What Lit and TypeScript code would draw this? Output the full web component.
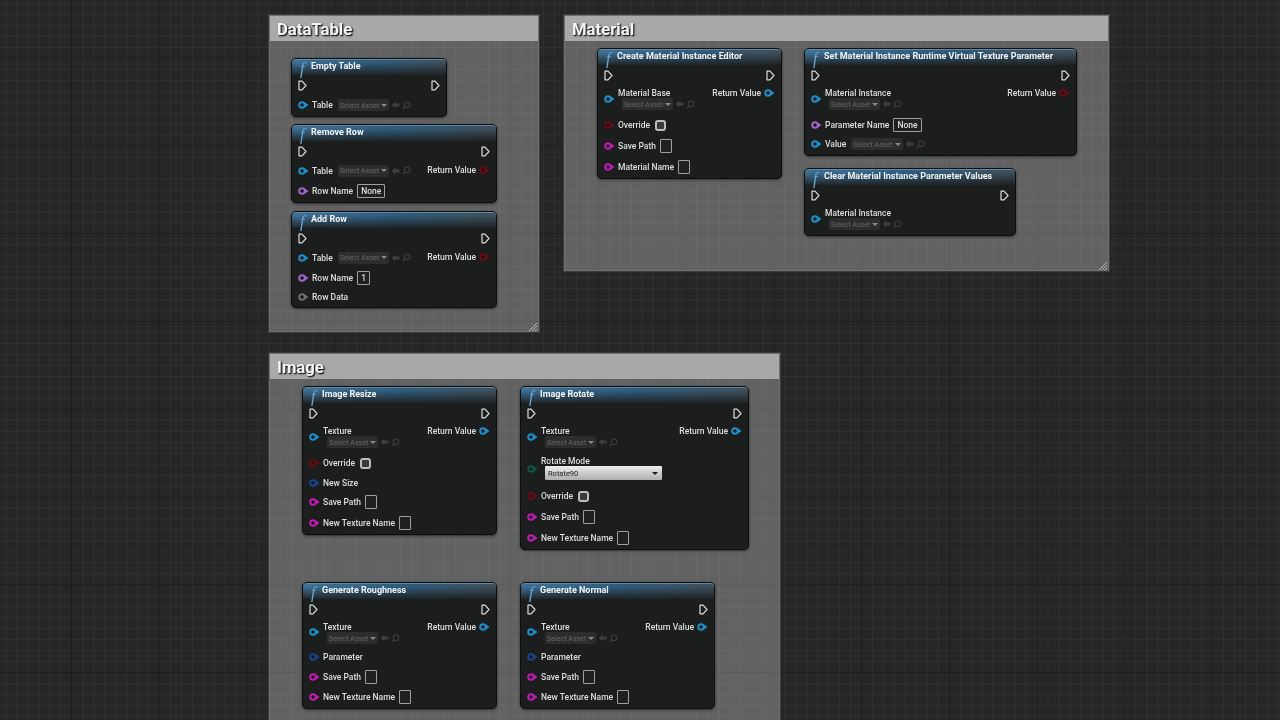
import { LitElement, css, html, nothing, svg } from 'lit';
import { customElement, property } from 'lit/decorators.js';

type PinType = 'object' | 'name' | 'string' | 'bool' | 'struct' | 'wild' | 'enum';

interface Row {
  pin: PinType;
  label: string;
  h: number;
  // what sits next to the label
  asset?: 'inline' | 'below';
  text?: string;
  check?: boolean;
  dropdown?: string;
  ret?: PinType;
}

interface NodeData {
  title: string;
  x: number;
  y: number;
  w: number;
  rows: Row[];
}

interface CommentData {
  title: string;
  x: number;
  y: number;
  w: number;
  h: number;
}

const comments: CommentData[] = [
  { title: 'DataTable', x: 269, y: 15, w: 270, h: 317 },
  { title: 'Material', x: 564, y: 15, w: 545, h: 256 },
  { title: 'Image', x: 269, y: 353, w: 511, h: 420 },
];

const nodes: NodeData[] = [
  {
    title: 'Empty Table', x: 291, y: 58, w: 156,
    rows: [{ pin: 'object', label: 'Table', h: 20, asset: 'inline' }],
  },
  {
    title: 'Remove Row', x: 291, y: 124, w: 206,
    rows: [
      { pin: 'object', label: 'Table', h: 19, asset: 'inline', ret: 'bool' },
      { pin: 'name', label: 'Row Name', h: 21, text: 'None' },
    ],
  },
  {
    title: 'Add Row', x: 291, y: 211, w: 206,
    rows: [
      { pin: 'object', label: 'Table', h: 19, asset: 'inline', ret: 'bool' },
      { pin: 'name', label: 'Row Name', h: 21, text: '1' },
      { pin: 'wild', label: 'Row Data', h: 18 },
    ],
  },
  {
    title: 'Create Material Instance Editor', x: 597, y: 48, w: 185,
    rows: [
      { pin: 'object', label: 'Material Base', h: 30, asset: 'below', ret: 'object' },
      { pin: 'bool', label: 'Override', h: 20, check: true },
      { pin: 'string', label: 'Save Path', h: 21, text: '' },
      { pin: 'string', label: 'Material Name', h: 21, text: '' },
    ],
  },
  {
    title: 'Set Material Instance Runtime Virtual Texture Parameter', x: 804, y: 48, w: 273,
    rows: [
      { pin: 'object', label: 'Material Instance', h: 30, asset: 'below', ret: 'bool' },
      { pin: 'name', label: 'Parameter Name', h: 19, text: 'None' },
      { pin: 'object', label: 'Value', h: 20, asset: 'inline' },
    ],
  },
  {
    title: 'Clear Material Instance Parameter Values', x: 804, y: 168, w: 212,
    rows: [{ pin: 'object', label: 'Material Instance', h: 29, asset: 'below' }],
  },
  {
    title: 'Image Resize', x: 302, y: 386, w: 195,
    rows: [
      { pin: 'object', label: 'Texture', h: 30, asset: 'below', ret: 'object' },
      { pin: 'bool', label: 'Override', h: 20, check: true },
      { pin: 'struct', label: 'New Size', h: 19 },
      { pin: 'string', label: 'Save Path', h: 20, text: '' },
      { pin: 'string', label: 'New Texture Name', h: 21, text: '' },
    ],
  },
  {
    title: 'Image Rotate', x: 520, y: 386, w: 229,
    rows: [
      { pin: 'object', label: 'Texture', h: 30, asset: 'below', ret: 'object' },
      { pin: 'enum', label: 'Rotate Mode', h: 33, dropdown: 'Rotate90' },
      { pin: 'bool', label: 'Override', h: 20, check: true },
      { pin: 'string', label: 'Save Path', h: 21, text: '' },
      { pin: 'string', label: 'New Texture Name', h: 21, text: '' },
    ],
  },
  {
    title: 'Generate Roughness', x: 302, y: 582, w: 195,
    rows: [
      { pin: 'object', label: 'Texture', h: 28, asset: 'below', ret: 'object' },
      { pin: 'struct', label: 'Parameter', h: 20 },
      { pin: 'string', label: 'Save Path', h: 19, text: '' },
      { pin: 'string', label: 'New Texture Name', h: 21, text: '' },
    ],
  },
  {
    title: 'Generate Normal', x: 520, y: 582, w: 195,
    rows: [
      { pin: 'object', label: 'Texture', h: 28, asset: 'below', ret: 'object' },
      { pin: 'struct', label: 'Parameter', h: 20 },
      { pin: 'string', label: 'Save Path', h: 19, text: '' },
      { pin: 'string', label: 'New Texture Name', h: 21, text: '' },
    ],
  },
];

const pinIcon = (type: PinType) => html`<svg class="pin ${type}" viewBox="0 0 11 8" width="11" height="8">
  <circle cx="4" cy="4" r="2.8" fill="#141516" stroke="currentColor" stroke-width="2"></circle>
  <polygon points="7,1.6 10.6,4 7,6.4" fill="currentColor"></polygon>
</svg>`;

const execIcon = html`<svg class="exec" viewBox="0 0 9 11" width="9" height="11">
  <path d="M1 1.2 H4 L8 5.5 L4 9.8 H1 Z" fill="none" stroke="#dcdcdc" stroke-width="1.2" stroke-linejoin="round"></path>
</svg>`;

const assetPicker = html`<span class="asset">
  <span class="asset-box">Select Asset<i class="caret"></i></span>
  <svg viewBox="0 0 9 8" width="9" height="8"><path d="M0.5 4 L4.5 0.5 V2.6 H8.5 V5.4 H4.5 V7.5 Z" fill="#3d3e3e"></path></svg>
  <svg viewBox="0 0 9 9" width="9" height="9">
    <circle cx="5" cy="3.8" r="2.8" fill="none" stroke="#3d3e3e" stroke-width="1.1"></circle>
    <path d="M3 5.8 L0.8 8" stroke="#3d3e3e" stroke-width="1.2"></path>
  </svg>
</span>`;

@customElement('bp-node')
export class BpNode extends LitElement {
  @property({ attribute: false }) data!: NodeData;

  renderRow(row: Row) {
    const stacked = row.asset === 'below' || !!row.dropdown;
    return html`<div class="row" style="height:${row.h}px">
      <div class="left ${stacked ? 'stacked' : ''}">
        ${pinIcon(row.pin)}
        ${stacked
          ? html`<div class="stack">
              <span class="label">${row.label}</span>
              ${row.dropdown
                ? html`<span class="dropdown">${row.dropdown}<i class="caret"></i></span>`
                : assetPicker}
            </div>`
          : html`<span class="label">${row.label}</span>
              ${row.asset === 'inline' ? assetPicker : nothing}
              ${row.text !== undefined ? html`<span class="text-box">${row.text}</span>` : nothing}
              ${row.check ? html`<span class="check"></span>` : nothing}`}
      </div>
      ${row.ret
        ? html`<div class="right ${stacked ? 'top' : ''}">
            <span class="label">Return Value</span>${pinIcon(row.ret)}
          </div>`
        : nothing}
    </div>`;
  }

  render() {
    const d = this.data;
    return html`<div class="node" style="left:${d.x}px;top:${d.y}px;width:${d.w}px">
      <div class="header"><span class="fn">f</span>${d.title}</div>
      <div class="exec-row">${execIcon}${execIcon}</div>
      ${d.rows.map((r) => this.renderRow(r))}
    </div>`;
  }

  static styles = css`
    .node {
      position: absolute;
      box-sizing: border-box;
      padding-bottom: 1px;
      background: #1c1e1e;
      border: 1px solid #0c0d0e;
      border-radius: 5px;
      box-shadow: 0 1px 3px rgba(0, 0, 0, 0.55);
      font-family: Roboto, 'Liberation Sans', sans-serif;
      font-size: 8.5px;
      font-weight: 500;
      color: #dedede;
    }
    .header {
      display: flex;
      align-items: center;
      height: 16px;
      box-sizing: border-box;
      padding: 0 0 3px 8px;
      border-radius: 4px 4px 0 0;
      border-top: 1px solid #5f8aa8;
      background:
        linear-gradient(to bottom, rgba(28, 30, 30, 0) 15%, rgba(28, 30, 30, 0.9) 100%),
        linear-gradient(to right, #3f7196, #2f5c7e 50%, #3f4f5a 100%);
      color: #f2f5f7;
      font-size: 9px;
      font-weight: 700;
      white-space: nowrap;
    }
    .fn {
      width: 11px;
      margin-top: 4px;
      font-family: 'Liberation Serif', serif;
      font-style: italic;
      font-size: 16px;
      font-weight: 400;
      line-height: 13px;
      color: #6aa9d4;
    }
    .exec-row {
      display: flex;
      justify-content: space-between;
      align-items: center;
      height: 20px;
      padding: 0 6px;
    }
    .row {
      display: flex;
      justify-content: space-between;
      align-items: center;
      padding: 0 6px;
      white-space: nowrap;
    }
    .left,
    .right {
      display: flex;
      align-items: center;
      box-sizing: border-box;
      height: 100%;
    }
    .left {
      gap: 4px;
    }
    .left.stacked {
      padding-bottom: 2px;
    }
    .pin {
      flex: none;
    }
    .left > .pin + * {
      margin-left: -1px;
    }
    .right {
      gap: 3px;
      padding-bottom: 2px;
    }
    .right.top {
      height: 16px;
      padding-bottom: 0;
      align-self: flex-start;
    }
    .object { color: #1d8fca; }
    .name { color: #a364c8; }
    .string { color: #c21ab4; }
    .bool { color: #6b0b10; }
    .struct { color: #17468f; }
    .wild { color: #6e6e6e; }
    .enum { color: #0c574d; }
    .label {
      line-height: 12px;
    }
    .stack {
      display: flex;
      flex-direction: column;
      align-items: flex-start;
      align-self: flex-start;
      padding-top: 2px;
    }
    .asset {
      display: inline-flex;
      align-items: center;
      gap: 2px;
      margin-left: 1px;
    }
    .stack .asset {
      margin: -1px 0 0 4px;
    }
    .asset-box {
      display: inline-flex;
      align-items: center;
      gap: 2px;
      height: 12px;
      padding: 0 2px 0 2px;
      background: #2c2d2d;
      border-radius: 2px;
      color: #686868;
      font-size: 7.1px;
      font-weight: 400;
    }
    .caret {
      width: 0;
      height: 0;
      border-left: 3px solid transparent;
      border-right: 3px solid transparent;
      border-top: 3px solid #8a8a8a;
    }
    .text-box {
      box-sizing: border-box;
      height: 14px;
      min-width: 12px;
      padding: 0 3px;
      border: 1px solid #a0a0a0;
      border-radius: 1px;
      background: #1f2020;
      line-height: 12px;
    }
    .check {
      box-sizing: border-box;
      width: 11px;
      height: 11px;
      margin-left: 1px;
      border: 2px solid #bdbdbd;
      border-radius: 3px;
      background: #3a3b3c;
    }
    .dropdown {
      display: flex;
      justify-content: space-between;
      align-items: center;
      box-sizing: border-box;
      width: 117px;
      height: 14px;
      margin: -1px 0 0 4px;
      padding: 0 3px;
      border-radius: 1px;
      background: linear-gradient(to bottom, #efefef, #c9c9c9 55%, #b0b0b0);
      color: #222;
      font-size: 7.5px;
      font-weight: 400;
    }
    .dropdown .caret {
      margin-right: 1px;
      border-left-width: 3.5px;
      border-right-width: 3.5px;
      border-top: 3.5px solid #1a1a1a;
    }
  `;
}

@customElement('app-root')
export class AppRoot extends LitElement {
  renderComment(c: CommentData) {
    return html`<div class="comment" style="left:${c.x}px;top:${c.y}px;width:${c.w}px;height:${c.h}px">
      <div class="comment-title">${c.title}</div>
      <svg class="grip" viewBox="0 0 10 9" width="10" height="9">
        ${[0, 3, 6].map(
          (o) => svg`<line x1=${10 - (8 - o)} y1="9" x2="10" y2=${o + 1} stroke="#b8b8b8" stroke-width="1"></line>`,
        )}
      </svg>
    </div>`;
  }

  render() {
    return html`<div class="graph">
      ${comments.map((c) => this.renderComment(c))}
      ${nodes.map((n) => html`<bp-node .data=${n}></bp-node>`)}
    </div>`;
  }

  static styles = css`
    :host {
      display: block;
      width: 1280px;
      height: 720px;
      overflow: hidden;
    }
    .graph {
      position: relative;
      width: 1280px;
      height: 720px;
      overflow: hidden;
      filter: blur(0.3px);
      background-color: #262626;
      background-image:
        linear-gradient(to right, #1a1a1a 1px, transparent 1px),
        linear-gradient(to bottom, #1a1a1a 1px, transparent 1px),
        linear-gradient(to right, #303030 1px, transparent 1px),
        linear-gradient(to bottom, #303030 1px, transparent 1px);
      background-size:
        87.8px 87.8px,
        87.8px 87.8px,
        10.975px 10.975px,
        10.975px 10.975px;
      background-position:
        71px 0,
        0 57.5px,
        5.5px 0,
        0 3px;
    }
    .comment {
      position: absolute;
      box-sizing: border-box;
      border: 1px solid #6f6f6f;
      outline: 1px solid #3c3c3c;
      background: rgba(255, 255, 255, 0.28);
    }
    .comment-title {
      box-sizing: border-box;
      height: 25px;
      padding-left: 7px;
      background: #a9a9a9;
      color: #f6f6f6;
      font-family: Roboto, 'Liberation Sans', sans-serif;
      font-size: 16.7px;
      font-weight: 700;
      line-height: 28px;
      text-shadow: 1px 1px 1px #1c1c1c, 1px 1px 2px #333;
    }
    .grip {
      position: absolute;
      right: 1px;
      bottom: 0;
    }
  `;
}
